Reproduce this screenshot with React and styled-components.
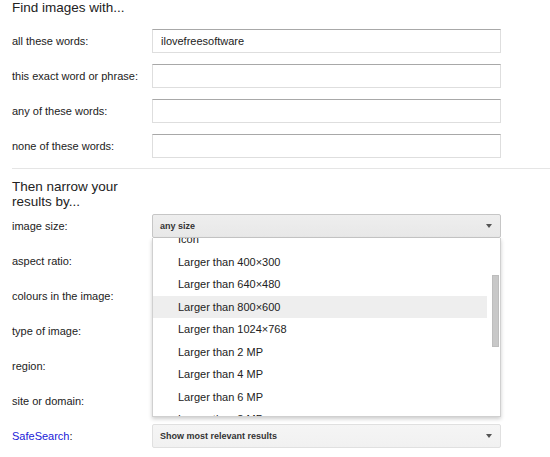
import React from "react"
import styled, { createGlobalStyle } from "styled-components"

const Global = createGlobalStyle`
  body {
    margin: 0;
    background: #fff;
    font-family: "Liberation Sans", Arial, sans-serif;
    color: #222;
  }
`

const Page = styled.div`
  width: 550px;
  height: 457px;
  overflow: hidden;
  padding-left: 12px;
  box-sizing: border-box;
`

const Heading = styled.div`
  font-size: 13.5px;
  line-height: 15px;
  width: ${p => p.$narrow ? "125px" : "auto"};
  margin: ${p => p.$narrow ? "10px 0 5px" : "0 0 14px"};
`

const Form = styled.div`
  display: grid;
  grid-template-columns: 140px 349px;
  row-gap: 11px;
  align-items: center;
`

const Label = styled.div`
  font-size: 11px;
  line-height: 24px;
  height: 24px;
  color: #222;
`

const Blue = styled.span`
  color: #1a1ad8;
`

const TextBox = styled.div`
  height: 24px;
  box-sizing: border-box;
  border: 1px solid #dedede;
  border-top-color: #a8a8a8;
  background: #fff;
  padding-left: 8px;
  font-size: 11px;
  line-height: 22px;
  color: #222;
`

const Divider = styled.div`
  height: 1px;
  background: #e5e5e5;
  margin: 10px 0 0;
  width: 538px;
`

const SelectWrap = styled.div`
  position: relative;
  height: 24px;
`

const Select = styled.div`
  height: 24px;
  box-sizing: border-box;
  border: 1px solid ${p => p.$open ? "#c6c6c6" : "#e0e0e0"};
  border-radius: 2px;
  background: ${p => p.$open ? "linear-gradient(#eeeeee, #e8e8e8)" : "linear-gradient(#f5f5f5, #f1f1f1)"};
  display: flex;
  align-items: center;
  justify-content: space-between;
  padding: 0 8px 0 7px;
  font-size: 9px;
  font-weight: bold;
  color: #333;
`

const Arrow = styled.span`
  width: 0;
  height: 0;
  border-left: 3.5px solid transparent;
  border-right: 3.5px solid transparent;
  border-top: 4px solid #555;
`

const Menu = styled.div`
  position: absolute;
  top: 24px;
  left: 0;
  width: 349px;
  height: 179px;
  box-sizing: border-box;
  background: #fff;
  border: 1px solid #d0d0d0;
  border-top: none;
  box-shadow: 0 2px 4px rgba(0, 0, 0, 0.2);
  overflow: hidden;
  z-index: 2;
`

const MenuList = styled.div`
  margin-top: -10px;
  width: 334px;
`

const Item = styled.div`
  height: 22.5px;
  line-height: 22.5px;
  padding-left: 25px;
  font-size: 11px;
  color: #222;
  background: ${p => p.$hover ? "#eeeeee" : "transparent"};
`

const Thumb = styled.div`
  position: absolute;
  left: 339px;
  top: 37px;
  width: 7px;
  height: 72px;
  background: #c8c8c8;
  border: 1px solid #bdbdbd;
  box-sizing: border-box;
`

// list is scrolled so that "Icon" sits half out of view at the top
const sizes = [
  "Icon",
  "Larger than 400×300", "Larger than 640×480", "Larger than 800×600",
  "Larger than 1024×768", "Larger than 2 MP", "Larger than 4 MP",
  "Larger than 6 MP", "Larger than 8 MP",
]

export default function App() {
  return (
    <Page>
      <Global />
      <Heading>Find images with...</Heading>
      <Form>
        <Label>all these words:</Label>
        <TextBox>ilovefreesoftware</TextBox>
        <Label>this exact word or phrase:</Label>
        <TextBox />
        <Label>any of these words:</Label>
        <TextBox />
        <Label>none of these words:</Label>
        <TextBox />
      </Form>
      <Divider />
      <Heading $narrow>Then narrow your results by...</Heading>
      <Form>
        <Label>image size:</Label>
        <SelectWrap>
          <Select $open>any size<Arrow /></Select>
          <Menu>
            <MenuList>
              {sizes.map(s => (
                <Item key={s} $hover={s === "Larger than 800×600"}>{s}</Item>
              ))}
            </MenuList>
            <Thumb />
          </Menu>
        </SelectWrap>
        <Label>aspect ratio:</Label>
        <SelectWrap />
        <Label>colours in the image:</Label>
        <SelectWrap />
        <Label>type of image:</Label>
        <SelectWrap />
        <Label>region:</Label>
        <SelectWrap />
        <Label>site or domain:</Label>
        <SelectWrap />
        <Label><Blue>SafeSearch</Blue>:</Label>
        <SelectWrap>
          <Select>Show most relevant results<Arrow /></Select>
        </SelectWrap>
      </Form>
    </Page>
  )
}
